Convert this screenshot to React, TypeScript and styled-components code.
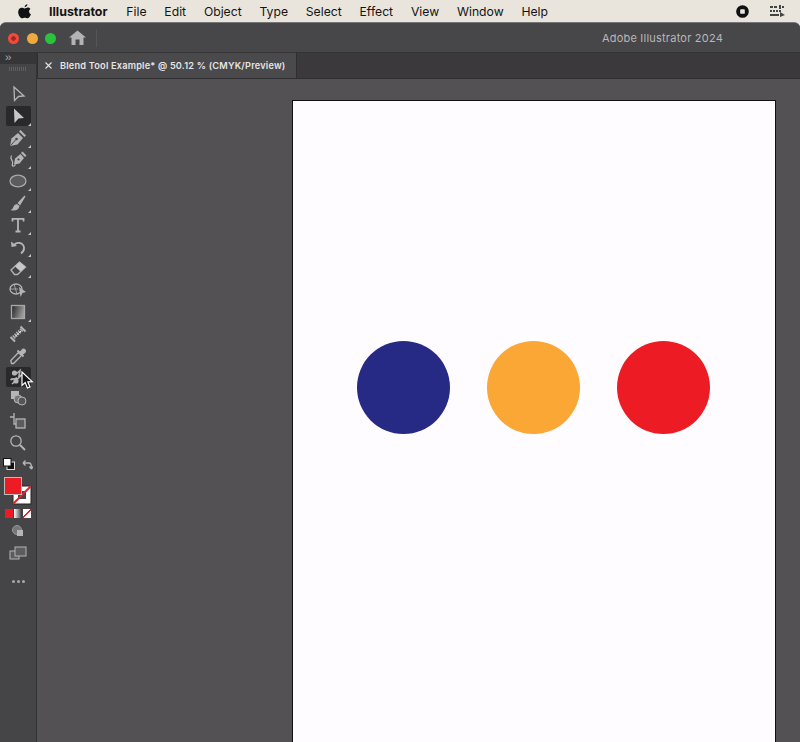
import React from 'react';
import styled, { createGlobalStyle } from 'styled-components';

const GlobalStyle = createGlobalStyle`
  html, body {
    margin: 0;
    padding: 0;
    background: #e9e5dc;
    overflow: hidden;
  }
`;

const Screen = styled.div`
  width: 800px;
  height: 742px;
  display: flex;
  flex-direction: column;
  overflow: hidden;
  background: #e9e5dc;
  font-family: 'Inter', 'Liberation Sans', sans-serif;
`;

const MenuBar = styled.div`
  height: 22px;
  flex: none;
  display: flex;
  align-items: center;
  padding: 0 15px 0 18px;
  background: #e9e5dc;
  color: #131313;
  font-size: 12.2px;
`;

const AppleIcon = styled.svg`
  width: 13px;
  height: 15px;
  margin-right: 18px;
  fill: #111;
`;

const MenuList = styled.div`
  display: flex;
  gap: 17.8px;
`;

const MenuItem = styled.span<{ $bold?: boolean }>`
  font-weight: ${(p) => (p.$bold ? 700 : 400)};
  font-size: ${(p) => (p.$bold ? '12.4px' : 'inherit')};
  margin-right: ${(p) => (p.$bold ? '1px' : '0')};
  white-space: nowrap;
`;

const MenuStatus = styled.div`
  margin-left: auto;
  display: flex;
  align-items: center;
  gap: 21px;
`;

const AppWindow = styled.div`
  flex: 1;
  display: flex;
  flex-direction: column;
  border-radius: 6px 6px 0 0;
  overflow: hidden;
  background: #535154;
  border-top: 1px solid #777;
  min-height: 0;
`;

const TitleBar = styled.div`
  height: 29px;
  flex: none;
  display: flex;
  align-items: center;
  padding: 0 77px 0 8px;
  background: #474648;
  border-bottom: 1px solid #343335;
`;

const Lights = styled.div`
  display: flex;
  gap: 7.5px;
  margin-top: 1px;
`;

const Light = styled.span<{ $color: string; $mark?: string }>`
  width: 11px;
  height: 11px;
  border-radius: 50%;
  background: ${(p) =>
    p.$mark
      ? `radial-gradient(circle, ${p.$mark} 0 2px, ${p.$color} 2.5px)`
      : p.$color};
`;

const HomeIcon = styled.svg`
  width: 17px;
  height: 15px;
  margin-left: 13px;
  fill: #b4b3b4;
`;

const TitleDivider = styled.span`
  width: 1px;
  height: 18px;
  margin-left: 10px;
  background: #555456;
`;

const AppTitle = styled.span`
  margin-left: auto;
  color: #b9b8b9;
  font-size: 11px;
  letter-spacing: 0.22px;
`;

const Workspace = styled.div`
  flex: 1;
  display: flex;
  min-height: 0;
`;

const ToolPanel = styled.div`
  position: relative;
  width: 36px;
  flex: none;
  display: flex;
  flex-direction: column;
  align-items: center;
  background: #454446;
  border-right: 1px solid #333234;
`;

const PanelHead = styled.div`
  width: 100%;
  height: 11px;
  flex: none;
  background: #363537;
  color: #b0afb0;
  font-size: 10px;
  line-height: 9px;
  padding-left: 5px;
  letter-spacing: -1px;
  box-sizing: border-box;
`;

const Grip = styled.div`
  width: 18px;
  height: 4px;
  flex: none;
  margin: 3px 0 13px;
  background: repeating-linear-gradient(90deg, #5f5e60 0 1px, transparent 1px 2px);
`;

const ToolSlot = styled.div<{ $active?: boolean; $corner?: boolean }>`
  position: relative;
  width: 25px;
  height: 20px;
  margin-bottom: 1.8px;
  flex: none;
  display: flex;
  align-items: center;
  justify-content: center;
  border-radius: 2px;
  background: ${(p) => (p.$active ? '#29282a' : 'transparent')};

  svg {
    width: 18px;
    height: 18px;
    fill: none;
    stroke: #b5b4b5;
    stroke-width: 1.3;
  }

  &::after {
    content: '';
    display: ${(p) => (p.$corner ? 'block' : 'none')};
    position: absolute;
    right: 0;
    bottom: 0;
    border-style: solid;
    border-width: 0 0 3px 3px;
    border-color: transparent transparent #c4c3c4 transparent;
  }
`;

const ColorSection = styled.div`
  width: 100%;
  display: flex;
  flex-direction: column;
  align-items: center;
  flex: none;
`;

const SwapRow = styled.div`
  width: 31px;
  height: 12px;
  display: flex;
  justify-content: space-between;
  align-items: center;
  margin: 2px 0 7px;
`;

const MiniDefaults = styled.svg`
  width: 12px;
  height: 12px;
`;

const SwapArrow = styled.svg`
  width: 11px;
  height: 11px;
  margin-right: 1px;
  fill: none;
  stroke: #b5b4b5;
  stroke-width: 1.4;
`;

const FillStroke = styled.svg`
  width: 28px;
  height: 28px;
  margin-bottom: 4px;
`;

const ModeRow = styled.div`
  display: flex;
  gap: 1px;
  height: 9px;
  margin-bottom: 4px;
`;

const ModeSwatch = styled.span<{ $kind: 'color' | 'gradient' | 'none' }>`
  width: 8px;
  height: 9px;
  background: ${(p) =>
    p.$kind === 'color'
      ? '#ed1c24'
      : p.$kind === 'gradient'
        ? 'linear-gradient(90deg, #fff, #333)'
        : 'linear-gradient(135deg, #fff 42%, #ed1c24 42% 58%, #fff 58%)'};
`;

const LowerTool = styled.svg<{ $gap: number }>`
  width: 18px;
  height: 18px;
  flex: none;
  margin-bottom: ${(p) => p.$gap}px;
`;

const Dots = styled.div`
  display: flex;
  gap: 2px;
  margin-top: 18px;
`;

const Dot = styled.span`
  width: 3px;
  height: 3px;
  border-radius: 50%;
  background: #a9a8a9;
`;

const Pointer = styled.svg`
  position: absolute;
  left: 20px;
  top: 318px;
  width: 14px;
  height: 19px;
`;

const Main = styled.div`
  flex: 1;
  display: flex;
  flex-direction: column;
  min-width: 0;
`;

const TabRow = styled.div`
  height: 25px;
  flex: none;
  display: flex;
  background: #3b393b;
  border-bottom: 1px solid #2f2e30;
`;

const Tab = styled.div`
  display: flex;
  align-items: center;
  gap: 8px;
  width: 260px;
  padding-left: 7px;
  box-sizing: border-box;
  background: #4a494b;
  border-right: 1px solid #2f2e30;
  border-left: 1px solid #2f2e30;
  color: #e6e5e6;
  font-size: 9.2px;
  font-weight: 600;
  letter-spacing: 0.2px;
  white-space: nowrap;
`;

const TabClose = styled.svg`
  width: 7px;
  height: 7px;
  stroke: #e6e5e6;
  stroke-width: 1.1;
`;

const Canvas = styled.div`
  flex: 1;
  min-height: 0;
  overflow: hidden;
  background: #535154;
  padding: 21px 24px 0 255px;
`;

const Artboard = styled.div`
  height: 700px;
  box-sizing: border-box;
  padding: 240px 65px 0 64px;
  display: flex;
  justify-content: space-between;
  align-items: flex-start;
  background: #fefcff;
  border: 1px solid #111;
  border-bottom: none;
`;

const Circle = styled.div<{ $color: string }>`
  width: 93px;
  height: 93px;
  border-radius: 50%;
  background: ${(p) => p.$color};
`;

const menus = ['File', 'Edit', 'Object', 'Type', 'Select', 'Effect', 'View', 'Window', 'Help'];

const nib = 'M1 17 L2.5 9.5 L9 4 L14 9 L8.5 15.5 Z';

const tools: { icon: React.ReactNode; active?: boolean; corner?: boolean }[] = [
  { icon: <path d="M5 2 L15 11 L9.5 11.5 L5.5 15.5 Z" /> },
  {
    active: true,
    corner: true,
    icon: <path d="M5 1.5 L15 11 L9.5 11.5 L5.5 16 Z" fill="#c8c7c8" stroke="none" />,
  },
  {
    corner: true,
    icon: (
      <>
        <path d={nib} fill="#b5b4b5" stroke="none" />
        <path d="M10 2.5 L11.5 1 L17 6.5 L15.5 8 Z" fill="#b5b4b5" stroke="none" />
        <path d="M1.5 16.5 L6.5 11" stroke="#454446" strokeWidth="1" />
        <circle cx="7.5" cy="10" r="1.3" fill="#454446" stroke="none" />
      </>
    ),
  },
  {
    corner: true,
    icon: (
      <>
        <path d="M5 14.5 L6 8.5 L11.5 4 L15 8 L10.5 13.5 Z" fill="#b5b4b5" stroke="none" />
        <path d="M12 3 L13.5 1.5 L17.5 5.5 L16 7 Z" fill="#b5b4b5" stroke="none" />
        <path d="M2.5 5.5 C0 9.5 5 10.5 3.5 14 C2.5 16.5 5 17 6.5 14.5" />
        <circle cx="9.5" cy="9.5" r="1.1" fill="#454446" stroke="none" />
      </>
    ),
  },
  {
    corner: true,
    icon: <ellipse cx="9" cy="9" rx="8" ry="5.8" fill="#5c5b5d" stroke="#a9a8a9" />,
  },
  {
    corner: true,
    icon: (
      <>
        <path d="M8.5 9 L15.5 1.5 L16.5 2.5 L11 11.5 Z" fill="#b5b4b5" stroke="none" />
        <path d="M1.5 16 C5 15.5 3.5 10.5 8 10 L10.5 12 C10 16 5.5 17.5 1.5 16 Z" fill="#b5b4b5" stroke="none" />
      </>
    ),
  },
  {
    corner: true,
    icon: <path d="M3.5 5.5 V2.8 H14.5 V5.5 M9 2.8 V15.5 M6.5 15.5 H11.5" strokeWidth="1.8" />,
  },
  {
    corner: true,
    icon: (
      <>
        <path d="M5 7.5 C7 3.5 14 4 15 9.5 C15.3 12 14 14 12 15.5" strokeWidth="1.8" />
        <path d="M2 3.5 L2.5 9 L8 8 Z" fill="#b5b4b5" stroke="none" />
      </>
    ),
  },
  {
    corner: true,
    icon: (
      <>
        <path d="M2 11 L10.5 3 L16.5 8 L8.5 15.5 H5.5 Z" stroke="#b5b4b5" />
        <path d="M6 7.5 L10.5 3 L16.5 8 L11.5 12.5 Z" fill="#c8c7c8" stroke="none" />
      </>
    ),
  },
  {
    icon: (
      <>
        <ellipse cx="7" cy="8" rx="6" ry="5" />
        <path d="M1 8 H9 M5 3 L8 13" strokeWidth="0.8" />
        <path d="M10 6 L17 11 L13.5 12 L11.5 16 Z" fill="#b5b4b5" stroke="none" />
      </>
    ),
  },
  {
    corner: true,
    icon: (
      <>
        <defs>
          <linearGradient id="toolGradient" x1="0" x2="1" y1="0" y2="0.3">
            <stop offset="0" stopColor="#242324" />
            <stop offset="1" stopColor="#9d9c9d" />
          </linearGradient>
        </defs>
        <rect x="2.5" y="2.5" width="13" height="13" fill="url(#toolGradient)" stroke="#a9a8a9" />
      </>
    ),
  },
  {
    icon: (
      <>
        <path d="M4.5 12.5 L13 4.5" strokeWidth="4" strokeDasharray="1.5 1" />
        <path d="M1.5 12 L6 16.5 M11.5 1.5 L16.5 6.5" strokeWidth="2" />
        <path d="M6 11.5 L12 6" stroke="#e0dfe0" strokeWidth="1" />
      </>
    ),
  },
  {
    icon: (
      <>
        <path d="M2.5 16.5 L1.8 13.5 L9.5 5.5 L12.5 8.5 L4.5 16.5 Z" />
        <path d="M8.5 3.5 L14.5 9.5" strokeWidth="1.8" />
        <path d="M10.5 6 L14 2.2 A2 2 0 0 1 16.2 5 L12.5 8 Z" fill="#b5b4b5" />
      </>
    ),
  },
  {
    active: true,
    icon: (
      <>
        <path d="M1.5 12 C4 9.5 6 12.5 8 9.5 M7 6 L11 2.5 L10 8 L14 7 M3 16 L15 5" strokeWidth="1.6" />
        <circle cx="5.5" cy="5" r="2.6" fill="#b5b4b5" stroke="none" />
        <circle cx="7" cy="13" r="2.6" fill="#b5b4b5" stroke="none" />
      </>
    ),
  },
];

const App: React.FC = () => (
  <Screen>
    <GlobalStyle />
    <MenuBar>
      <AppleIcon viewBox="0 0 14 16">
        <path d="M10.2 0.2 C10.3 1.4 9 3.3 7.2 3.3 C7 1.8 8.6 0.3 10.2 0.2 Z M13.4 5.4 C11.2 6.8 11.6 10 13.9 11 C13.2 12.9 11.7 15.4 10.3 15.4 C9.1 15.4 8.8 14.7 7.4 14.7 C6 14.7 5.6 15.4 4.4 15.4 C2.7 15.4 0.2 11.8 0.2 8.5 C0.2 5.5 2.2 3.9 4.1 3.9 C5.4 3.9 6.4 4.7 7.2 4.7 C8 4.7 9.2 3.8 10.7 3.8 C11.4 3.8 12.6 4 13.4 5.4 Z" />
      </AppleIcon>
      <MenuList>
        <MenuItem $bold>Illustrator</MenuItem>
        {menus.map((m) => (
          <MenuItem key={m}>{m}</MenuItem>
        ))}
      </MenuList>
      <MenuStatus>
        <svg width="13" height="13" viewBox="0 0 14 14">
          <circle cx="7" cy="7" r="6.8" fill="#111" />
          <rect x="4.5" y="4.5" width="5" height="5" rx="1" fill="#e9e5dc" />
        </svg>
        <svg width="15" height="12" viewBox="0 0 15 12" fill="#444">
          <rect x="0" y="1" width="3" height="2" />
          <rect x="4" y="1" width="3" height="2" />
          <rect x="9" y="0" width="2" height="4" />
          <rect x="12" y="1" width="2" height="2" />
          <rect x="0" y="5" width="2" height="2" />
          <rect x="3" y="5" width="2" height="2" />
          <rect x="6" y="5" width="2" height="2" />
          <rect x="9" y="5" width="2" height="2" />
          <rect x="0" y="9" width="9" height="2" />
          <path d="M10 7 L15 10 L10 12 Z" />
        </svg>
      </MenuStatus>
    </MenuBar>
    <AppWindow>
      <TitleBar>
        <Lights>
          <Light $color="#ee4b3e" $mark="#9c2a20" />
          <Light $color="#f2a93b" />
          <Light $color="#2ac33e" />
        </Lights>
        <HomeIcon viewBox="0 0 17 15">
          <path d="M8.5 0.5 L17 7.5 H14.5 V15 H10.5 V9.5 H6.5 V15 H2.5 V7.5 H0 Z" />
        </HomeIcon>
        <TitleDivider />
        <AppTitle>Adobe Illustrator 2024</AppTitle>
      </TitleBar>
      <Workspace>
        <ToolPanel>
          <PanelHead>››</PanelHead>
          <Grip />
          {tools.map((t, i) => (
            <ToolSlot key={i} $active={t.active} $corner={t.corner}>
              <svg viewBox="0 0 18 18">{t.icon}</svg>
            </ToolSlot>
          ))}
          <LowerTool $gap={4.5} viewBox="0 0 18 18">
            <rect x="2" y="2" width="8" height="8" fill="#b5b4b5" />
            <circle cx="9" cy="10" r="4" fill="#777" stroke="#b5b4b5" />
            <circle cx="13" cy="12" r="4" fill="#555" stroke="#b5b4b5" />
          </LowerTool>
          <LowerTool $gap={4.5} viewBox="0 0 18 18" fill="none" stroke="#b5b4b5" strokeWidth="1.3">
            <path d="M5 1 V12 H16 M1 5 H5" />
            <rect x="7" y="7" width="9" height="9" fill="#5c5b5d" />
          </LowerTool>
          <LowerTool $gap={4} viewBox="0 0 18 18" fill="none" stroke="#b5b4b5">
            <circle cx="7" cy="7" r="5.2" strokeWidth="1.3" />
            <path d="M11 11 L16 16" strokeWidth="2" />
          </LowerTool>
          <ColorSection>
            <SwapRow>
              <MiniDefaults viewBox="0 0 12 12">
                <rect x="4" y="4" width="7.5" height="7.5" fill="#111" stroke="#ddd" />
                <rect x="0.5" y="0.5" width="7.5" height="7.5" fill="#fff" stroke="#111" />
              </MiniDefaults>
              <SwapArrow viewBox="0 0 11 11">
                <path d="M1 4 H7 C9 4 9.5 6 9.5 9 M1 4 L3.5 1.5 M1 4 L3.5 6.5 M9.5 10 L7.5 7.5 M9.5 10 L11 7.5" />
              </SwapArrow>
            </SwapRow>
            <FillStroke viewBox="0 0 28 28">
              <rect x="9" y="9" width="18" height="18" fill="#fff" stroke="#222" />
              <rect x="14" y="14" width="8" height="8" fill="#454446" />
              <path d="M9 27 L27 9" stroke="#ed1c24" strokeWidth="2" />
              <rect x="0.5" y="0.5" width="17" height="17" fill="#ed1c24" stroke="#bbb" />
            </FillStroke>
            <ModeRow>
              <ModeSwatch $kind="color" />
              <ModeSwatch $kind="gradient" />
              <ModeSwatch $kind="none" />
            </ModeRow>
            <LowerTool $gap={4} viewBox="0 0 18 18">
              <circle cx="8" cy="8" r="4.5" fill="#777" stroke="#999" />
              <rect x="8" y="8" width="6" height="6" fill="#b5b4b5" />
            </LowerTool>
            <LowerTool $gap={0} viewBox="0 0 18 18" fill="#5c5b5d" stroke="#b5b4b5">
              <rect x="1" y="7" width="9" height="8" />
              <rect x="6" y="3" width="11" height="9" />
            </LowerTool>
            <Dots>
              <Dot />
              <Dot />
              <Dot />
            </Dots>
          </ColorSection>
          <Pointer viewBox="0 0 14 19">
            <path d="M2 1 L2 14.5 L5.2 11.6 L7.4 17 L10 15.9 L7.8 10.8 L12.2 10.6 Z" fill="#111" stroke="#fff" strokeWidth="1.2" />
          </Pointer>
        </ToolPanel>
        <Main>
          <TabRow>
            <Tab>
              <TabClose viewBox="0 0 7 7">
                <path d="M0.5 0.5 L6.5 6.5 M6.5 0.5 L0.5 6.5" />
              </TabClose>
              Blend Tool Example* @ 50.12 % (CMYK/Preview)
            </Tab>
          </TabRow>
          <Canvas>
            <Artboard>
              <Circle $color="#262a84" />
              <Circle $color="#fba736" />
              <Circle $color="#ed1c24" />
            </Artboard>
          </Canvas>
        </Main>
      </Workspace>
    </AppWindow>
  </Screen>
);

export default App;
